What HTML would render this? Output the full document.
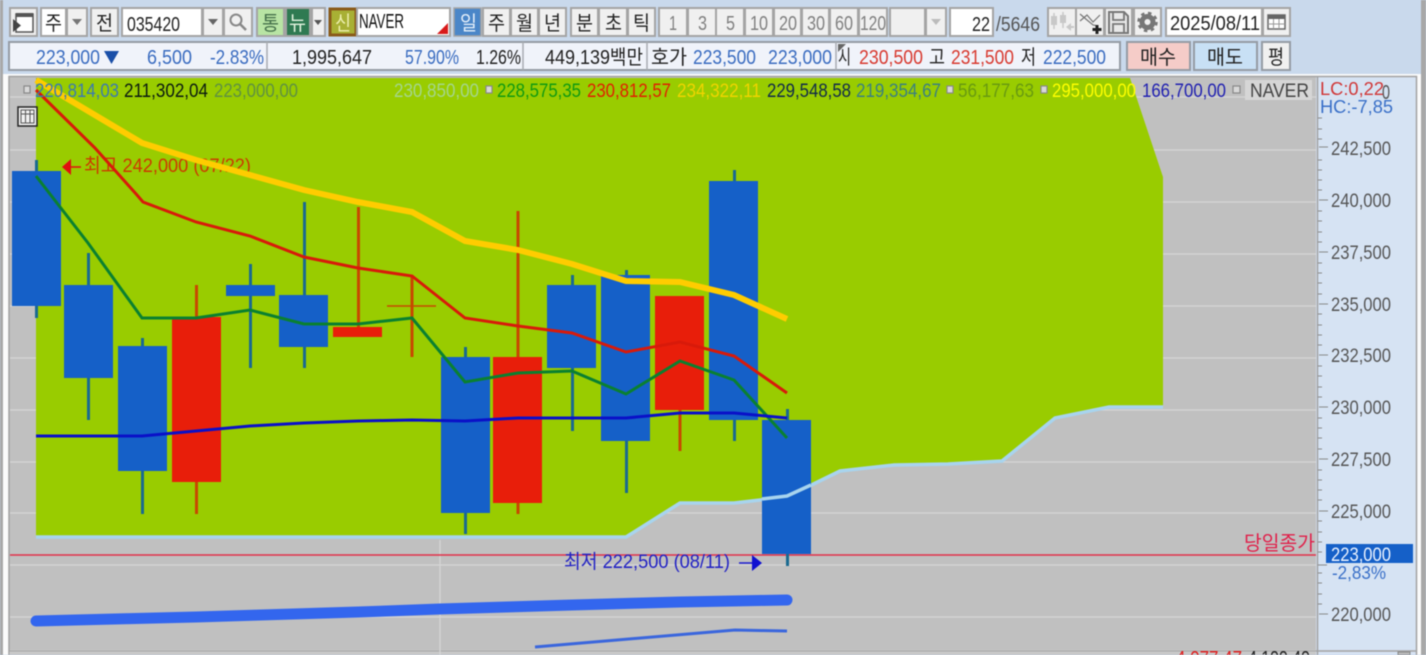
<!DOCTYPE html>
<html><head><meta charset="utf-8"><style>
html,body{margin:0;padding:0;width:1426px;height:655px;overflow:hidden;background:#c9d9ec}
svg{display:block;filter:blur(.5px)}
text{font-family:"Liberation Sans","Noto Sans CJK KR",sans-serif;font-size:20px}
.b{fill:#f0f0f0;stroke:#a4a4a4;stroke-width:2}
.w{fill:#fff;stroke:#a4a4a4;stroke-width:2}
.l{fill:#f0f3fa;stroke:#969ca4;stroke-width:2}
.k{fill:#222}.g{fill:#808080}.s{fill:#3a6cc0}.r{fill:#d83a30}
.ko{font-size:20px}
.lg{font-size:19.5px}
.ax{fill:#555;font-size:19.5px}
.gr{stroke:#d6d6d6;stroke-width:1.2}
.bl{fill:#1560c8}.rd{fill:#e81e0a}
.wb{stroke:#1a6a90;stroke-width:3}.wr{stroke:#c84800;stroke-width:3}
.sq{fill:#d8d8d8;stroke:#888;stroke-width:1.2}
</style></head><body>
<svg width="1426" height="655" viewBox="0 0 1426 655" xmlns="http://www.w3.org/2000/svg">
<rect width="1426" height="655" fill="#c9d9ec"/>
<rect x="0" y="0" width="3" height="655" fill="#a8a8a8"/>
<rect x="1421" y="0" width="5" height="655" fill="#a8a8a8"/>
<rect x="3" y="74" width="1418" height="581" fill="#fbfbfb"/>

<!-- ROW 1 -->
<rect class="b" x="10" y="8" width="27" height="28"/>
<path d="M16 14h17v18h-17z" fill="#fff" stroke="#555" stroke-width="1.500"/><path d="M16 13h17v4h-17z" fill="#555"/><path d="M13 19l8 6.500-8 6.500z" fill="#444"/>
<rect class="w" x="41" y="8" width="25" height="28"/><text class="k ko" x="45" y="30" textLength="17" lengthAdjust="spacingAndGlyphs">주</text>
<rect class="b" x="67" y="8" width="20" height="28"/><path d="M72 19h10l-5 6z" fill="#777"/>
<rect class="b" x="91" y="8" width="27" height="28"/><text class="k ko" x="96" y="30" textLength="17" lengthAdjust="spacingAndGlyphs">전</text>
<rect class="w" x="122" y="8" width="80" height="28"/><text class="k" x="127" y="31" textLength="53" lengthAdjust="spacingAndGlyphs">035420</text>
<rect class="b" x="203" y="8" width="20" height="28"/><path d="M208 19h10l-5 6z" fill="#666"/>
<rect class="b" x="224" y="8" width="28" height="28"/><circle cx="236" cy="20" r="5.500" fill="none" stroke="#888" stroke-width="2"/><path d="M240 24l6 6" stroke="#888" stroke-width="2.500"/>
<rect fill="#b8e4a4" stroke="#a4a4a4" stroke-width="2" x="257" y="8" width="27" height="28"/><text x="262" y="30" fill="#44704a" class="ko" textLength="17" lengthAdjust="spacingAndGlyphs">통</text>
<rect fill="#2f7a52" stroke="#a4a4a4" stroke-width="2" x="286" y="8" width="24" height="28"/><text x="289" y="30" fill="#e4f4e0" class="ko" textLength="17" lengthAdjust="spacingAndGlyphs">뉴</text>
<rect class="b" x="312" y="8" width="13" height="28"/><path d="M314 20h8l-4 5z" fill="#555"/>
<rect fill="#a8b034" stroke="#8a5a1a" stroke-width="3" x="330" y="9" width="26" height="26"/><text x="335" y="30" fill="#eef0b0" class="ko" textLength="16" lengthAdjust="spacingAndGlyphs">신</text>
<rect class="w" x="357" y="8" width="93" height="28"/><text fill="#111" x="359" y="28" textLength="45" lengthAdjust="spacingAndGlyphs">NAVER</text><path d="M448 23v11h-11z" fill="#d81a1a"/>
<rect fill="#4a86c8" stroke="#a4a4a4" stroke-width="1.500" x="454" y="8" width="27" height="28"/><text x="460" y="30" fill="#e6f0fa" class="ko" textLength="17" lengthAdjust="spacingAndGlyphs">일</text>
<rect class="b" x="483" y="8" width="27" height="28"/><text class="k ko" x="488" y="30" textLength="17" lengthAdjust="spacingAndGlyphs">주</text>
<rect class="b" x="511" y="8" width="27" height="28"/><text class="k ko" x="516" y="30" textLength="17" lengthAdjust="spacingAndGlyphs">월</text>
<rect class="b" x="539" y="8" width="27" height="28"/><text class="k ko" x="544" y="30" textLength="17" lengthAdjust="spacingAndGlyphs">년</text>
<rect class="b" x="571" y="8" width="27" height="28"/><text class="k ko" x="576" y="30" textLength="17" lengthAdjust="spacingAndGlyphs">분</text>
<rect class="b" x="599" y="8" width="28" height="28"/><text class="k ko" x="605" y="30" textLength="17" lengthAdjust="spacingAndGlyphs">초</text>
<rect class="b" x="628" y="8" width="27" height="28"/><text class="k ko" x="633" y="30" textLength="17" lengthAdjust="spacingAndGlyphs">틱</text>
<rect class="b" x="659" y="8" width="28" height="28"/><text class="g" x="669" y="30" textLength="8" lengthAdjust="spacingAndGlyphs">1</text>
<rect class="b" x="688" y="8" width="28" height="28"/><text class="g" x="698" y="30" textLength="9" lengthAdjust="spacingAndGlyphs">3</text>
<rect class="b" x="716" y="8" width="28" height="28"/><text class="g" x="726" y="30" textLength="9" lengthAdjust="spacingAndGlyphs">5</text>
<rect class="b" x="745" y="8" width="28" height="28"/><text class="g" x="750" y="30" textLength="18" lengthAdjust="spacingAndGlyphs">10</text>
<rect class="b" x="774" y="8" width="27" height="28"/><text class="g" x="779" y="30" textLength="18" lengthAdjust="spacingAndGlyphs">20</text>
<rect class="b" x="802" y="8" width="27" height="28"/><text class="g" x="807" y="30" textLength="18" lengthAdjust="spacingAndGlyphs">30</text>
<rect class="b" x="830" y="8" width="28" height="28"/><text class="g" x="835" y="30" textLength="18" lengthAdjust="spacingAndGlyphs">60</text>
<rect class="b" x="859" y="8" width="28" height="28"/><text class="g" x="860" y="30" textLength="26" lengthAdjust="spacingAndGlyphs">120</text>
<rect class="b" x="890" y="8" width="35" height="28"/>
<rect class="b" x="926" y="8" width="20" height="28"/><path d="M931 19h10l-5 6z" fill="#bbb"/>
<rect class="w" x="950" y="8" width="43" height="28"/><text class="k" x="972" y="31" textLength="18" lengthAdjust="spacingAndGlyphs">22</text>
<text fill="#555" x="996" y="31" textLength="44" lengthAdjust="spacingAndGlyphs">/5646</text>
<rect class="b" x="1048" y="8" width="28" height="28"/>
<path d="M1054 13v16M1063 12v16" stroke="#c8c8c8" stroke-width="1.500"/><path d="M1051 16h6v9h-6zM1060 15h6v8h-6z" fill="#c8c8c8"/><path d="M1066 27l5-4v8z" fill="#c8c8c8"/><path d="M1070 27h4" stroke="#c8c8c8" stroke-width="2"/>
<rect class="b" x="1076" y="8" width="28" height="28"/>
<path d="M1080 21l7-6 6 7 7-7M1080 14l7 6 6 5 5 1" fill="none" stroke="#777" stroke-width="1.200"/><path d="M1097 25v9M1092.500 29.500h9" stroke="#222" stroke-width="3"/>
<rect class="b" x="1105" y="8" width="27" height="28"/>
<path d="M1109 12h15l4 4v17h-19z" fill="#e8e8e8" stroke="#777" stroke-width="2"/><path d="M1113 12v8h11v-8M1113 33v-9h11v9" fill="none" stroke="#777" stroke-width="1.800"/>
<rect class="b" x="1134" y="8" width="27" height="28"/>
<circle cx="1147.500" cy="22" r="5.500" fill="none" stroke="#777" stroke-width="5"/><circle cx="1147.500" cy="22" r="9" fill="none" stroke="#777" stroke-width="2.500" stroke-dasharray="3.500 3.600"/>
<rect class="w" x="1166" y="8" width="96" height="28"/><text class="k" x="1170" y="30" textLength="90" lengthAdjust="spacingAndGlyphs">2025/08/11</text>
<rect class="b" x="1263" y="8" width="27" height="28"/>
<rect x="1268" y="15" width="17" height="14" fill="#fff" stroke="#666" stroke-width="1.500"/><path d="M1268 15h17v4h-17z" fill="#666"/><path d="M1273.500 19v10M1279 19v10M1268 24h17" stroke="#999" stroke-width="1"/>

<!-- ROW 2 -->
<rect class="l" x="9" y="42" width="1111" height="28"/>
<path d="M267 42v28M523 42v28M647 42v28M836 42v28" stroke="#a8acb2" stroke-width="1.500"/>
<text class="s" x="36" y="64" textLength="64" lengthAdjust="spacingAndGlyphs">223,000</text>
<path d="M104 51h15l-7.500 13z" fill="#1a4fa8"/>
<text class="s" x="147" y="64" textLength="45" lengthAdjust="spacingAndGlyphs">6,500</text>
<text class="s" x="210" y="64" textLength="54" lengthAdjust="spacingAndGlyphs">-2.83%</text>
<text class="k" x="292" y="64" textLength="80" lengthAdjust="spacingAndGlyphs">1,995,647</text>
<text class="s" x="405" y="64" textLength="54" lengthAdjust="spacingAndGlyphs">57.90%</text>
<text class="k" x="476" y="64" textLength="45" lengthAdjust="spacingAndGlyphs">1.26%</text>
<text class="k" x="545" y="64" textLength="98" lengthAdjust="spacingAndGlyphs">449,139백만</text>
<text class="k" x="651" y="64" textLength="36" lengthAdjust="spacingAndGlyphs">호가</text>
<text class="s" x="693" y="64" textLength="63" lengthAdjust="spacingAndGlyphs">223,500</text>
<text class="s" x="768" y="64" textLength="64" lengthAdjust="spacingAndGlyphs">223,000</text>
<text class="k" x="838" y="64" textLength="13" lengthAdjust="spacingAndGlyphs">시</text><path d="M838 44h8l-8 8z" fill="#666"/>
<text class="r" x="859" y="64" textLength="64" lengthAdjust="spacingAndGlyphs">230,500</text>
<text class="k" x="929" y="64" textLength="16" lengthAdjust="spacingAndGlyphs">고</text>
<text class="r" x="951" y="64" textLength="63" lengthAdjust="spacingAndGlyphs">231,500</text>
<text class="k" x="1021" y="64" textLength="15" lengthAdjust="spacingAndGlyphs">저</text>
<text class="s" x="1043" y="64" textLength="63" lengthAdjust="spacingAndGlyphs">222,500</text>
<rect fill="#f5ccc8" stroke="#969ca4" stroke-width="2" x="1127" y="42" width="63" height="28"/><text class="k" x="1140" y="64" textLength="36" lengthAdjust="spacingAndGlyphs">매수</text>
<rect fill="#c8e0f5" stroke="#969ca4" stroke-width="2" x="1194" y="42" width="63" height="28"/><text class="k" x="1207" y="64" textLength="36" lengthAdjust="spacingAndGlyphs">매도</text>
<rect fill="#f0f0f0" stroke="#969ca4" stroke-width="2" x="1262" y="42" width="28" height="28"/><text class="k" x="1268" y="64" textLength="16" lengthAdjust="spacingAndGlyphs">평</text>

<!-- CHART -->
<rect x="9" y="76" width="1307" height="574" fill="#c0c0c0"/>
<rect x="1316" y="76" width="100" height="579" fill="#d6e3f3"/>
<path d="M8.500 76.500h1408v579M1317.500 76v579M9 76v579" fill="none" stroke="#a2a2a2" stroke-width="1.500"/>
<path d="M9 651h1407" stroke="#a2a2a2" stroke-width="1.500"/>
<rect x="10" y="652" width="1306" height="3" fill="#c8c8c8"/>
<g class="gr">
<path d="M10 97h1306M10 150h1306M10 202h1306M10 254h1306M10 306h1306M10 358h1306M10 410h1306M10 462h1306M10 513h1306M10 565h1306M10 617h1306M440 540v115"/>
</g>
<path d="M36 78H1130L1163 177V407H1109L1055 418 1002 461 948 464 894 465 840 471 787 497 734 503 680 503 626 537H36z" fill="#99cc00"/>
<path d="M36 537H626L680 503H734L787 497 840 471 894 465 948 464 1002 461 1055 418 1109 407H1163" fill="none" stroke="#a8d4ee" stroke-width="3.500"/>

<!-- table icon -->
<rect x="18" y="107" width="19" height="19" fill="#f0f0f0" stroke="#222" stroke-width="1.500"/>
<path d="M21 110h13v13h-13zM21 114h13M25.500 110v13M30 110v13" fill="none" stroke="#555" stroke-width="1"/>

<!-- annotations (under lines) -->
<path d="M62 167l9-8v16z" fill="#e01010"/><path d="M70 167h11" stroke="#e01010" stroke-width="1.500"/>
<text fill="#cc3a00" x="84" y="172" style="font-size:19.500px" textLength="167" lengthAdjust="spacingAndGlyphs">최고 242,000 (07/22)</text>
<path d="M10 555h1306" stroke="#e2304a" stroke-width="1.500"/>
<text fill="#e0204a" x="1244" y="550" textLength="71" lengthAdjust="spacingAndGlyphs">당일종가</text>
<text fill="#2222c4" x="564" y="568" style="font-size:19.500px" textLength="166" lengthAdjust="spacingAndGlyphs">최저 222,500 (08/11)</text>
<path d="M739 563h14" stroke="#1a1ad0" stroke-width="1.500"/><path d="M752 555l10 8-10 8z" fill="#1010d0"/>

<!-- wicks -->
<path class="wb" d="M36.500 160V318M88.500 253V420M142.500 338V514M250.500 264V368M304.500 202V368M465.500 347V534M572.500 275V431M626.500 270V493M734.500 170V441M787.500 409V566"/>
<path class="wr" d="M196.500 285V514M358.500 207V327M412 275V357M518 211V514M680 296V451"/>
<path d="M387 306h49" stroke="#c84800" stroke-width="1.500"/>
<!-- bodies -->
<rect class="bl" x="12" y="171" width="49" height="135"/>
<rect class="bl" x="64" y="285" width="49" height="93"/>
<rect class="bl" x="118" y="346" width="49" height="125"/>
<rect class="rd" x="172" y="317" width="49" height="165"/>
<rect class="bl" x="226" y="285" width="49" height="11"/>
<rect class="bl" x="279" y="295" width="49" height="52"/>
<rect class="rd" x="333" y="327" width="49" height="10"/>
<rect class="bl" x="441" y="357" width="49" height="156"/>
<rect class="rd" x="493" y="357" width="49" height="146"/>
<rect class="bl" x="547" y="285" width="49" height="83"/>
<rect class="bl" x="601" y="275" width="49" height="166"/>
<rect class="rd" x="655" y="296" width="49" height="114"/>
<rect class="bl" x="709" y="181" width="49" height="239"/>
<rect class="bl" x="762" y="420" width="49" height="134"/>
<path d="M762 499L787 496 811 485" fill="none" stroke="#a8d4ee" stroke-width="3.500"/>

<!-- MAs -->
<path d="M36 80L142 143 196 160 250 175 304 190 358 202 412 212 465 241 518 250 572 264 626 281 680 282 734 295 787 319" fill="none" stroke="#ffcc00" stroke-width="6"/>
<path d="M36 90L95 148 137 195 143 202 196 222 250 236 304 257 358 268 412 276 465 318 518 326 572 333 626 352 680 342 734 356 787 393" fill="none" stroke="#d81a0a" stroke-width="3"/>
<path d="M36 176L88 243 142 318 196 318 250 310 304 324 358 324 412 318 465 382 518 373 572 371 626 394 680 361 734 380 787 438" fill="none" stroke="#0a8030" stroke-width="3"/>
<path d="M36 436L142 436 196 431 250 426 304 423 358 421 412 420 465 421 518 418 572 418 626 418 680 413 734 413 787 418" fill="none" stroke="#0a10c8" stroke-width="3"/>
<path d="M36 621L196 617 358 612 440 609 572 605 680 602 787 600" fill="none" stroke="#3366ee" stroke-width="11" stroke-linecap="round"/>
<path d="M535 647L735 630 787 631" fill="none" stroke="#3a66dd" stroke-width="3"/>

<!-- legend (over lines) -->
<rect x="24" y="86" width="6" height="7" class="sq"/>
<text class="lg" fill="#3a7ab0" x="35" y="97" textLength="84" lengthAdjust="spacingAndGlyphs">220,814,03</text>
<text class="lg" fill="#0a1a10" x="124" y="97" textLength="84" lengthAdjust="spacingAndGlyphs">211,302,04</text>
<text class="lg" fill="#5f9140" x="214" y="97" textLength="84" lengthAdjust="spacingAndGlyphs">223,000,00</text>
<text class="lg" fill="#a4d68c" x="394" y="97" textLength="85" lengthAdjust="spacingAndGlyphs">230,850,00</text>
<rect x="486" y="86" width="6" height="7" class="sq"/>
<text class="lg" fill="#109a10" x="497" y="97" textLength="84" lengthAdjust="spacingAndGlyphs">228,575,35</text>
<text class="lg" fill="#e02000" x="587" y="97" textLength="84" lengthAdjust="spacingAndGlyphs">230,812,57</text>
<text class="lg" fill="#f0d400" x="677" y="97" textLength="84" lengthAdjust="spacingAndGlyphs">234,322,11</text>
<text class="lg" fill="#102a4a" x="767" y="97" textLength="84" lengthAdjust="spacingAndGlyphs">229,548,58</text>
<text class="lg" fill="#3a8080" x="856" y="97" textLength="85" lengthAdjust="spacingAndGlyphs">219,354,67</text>
<rect x="947" y="86" width="6" height="7" class="sq"/>
<text class="lg" fill="#689a10" x="958" y="97" textLength="76" lengthAdjust="spacingAndGlyphs">56,177,63</text>
<rect x="1041" y="86" width="6" height="7" class="sq"/>
<text class="lg" fill="#ffff00" x="1052" y="97" textLength="84" lengthAdjust="spacingAndGlyphs">295,000,00</text>
<text class="lg" fill="#2020b0" x="1142" y="97" textLength="84" lengthAdjust="spacingAndGlyphs">166,700,00</text>
<rect x="1233" y="86" width="7" height="7" class="sq"/>
<rect x="1245" y="80" width="67" height="20" fill="#d6d6d6"/>
<text class="lg" fill="#444" x="1250" y="97" textLength="59" lengthAdjust="spacingAndGlyphs">NAVER</text>

<!-- axis -->
<path d="M1319 147h9M1319 200h9M1319 252h9M1319 304h9M1319 355h9M1319 407h9M1319 459h9M1319 511h9M1319 614h9" stroke="#888" stroke-width="1"/>
<path d="M1318 118h4M1318 129h4M1318 139h4M1318 160h4M1318 170h4M1318 180h4M1318 190h4M1318 211h4M1318 221h4M1318 232h4M1318 242h4M1318 263h4M1318 273h4M1318 283h4M1318 294h4M1318 314h4M1318 325h4M1318 335h4M1318 345h4M1318 366h4M1318 376h4M1318 387h4M1318 397h4M1318 418h4M1318 428h4M1318 438h4M1318 449h4M1318 470h4M1318 480h4M1318 490h4M1318 500h4M1318 521h4M1318 532h4M1318 542h4M1318 552h4M1318 565h9M1318 573h4M1318 583h4M1318 594h4M1318 604h4" stroke="#888" stroke-width="1"/>
<text fill="#d03838" x="1320" y="95" style="font-size:18px" textLength="64" lengthAdjust="spacingAndGlyphs">LC:0,22</text>
<text fill="#555" x="1382" y="99" textLength="8" lengthAdjust="spacingAndGlyphs">0</text>
<text fill="#3a70c8" x="1320" y="113" style="font-size:18px" textLength="73" lengthAdjust="spacingAndGlyphs">HC:-7,85</text>
<text class="ax" x="1331" y="155" textLength="60" lengthAdjust="spacingAndGlyphs">242,500</text>
<text class="ax" x="1331" y="207" textLength="60" lengthAdjust="spacingAndGlyphs">240,000</text>
<text class="ax" x="1331" y="259" textLength="60" lengthAdjust="spacingAndGlyphs">237,500</text>
<text class="ax" x="1331" y="311" textLength="60" lengthAdjust="spacingAndGlyphs">235,000</text>
<text class="ax" x="1331" y="362" textLength="60" lengthAdjust="spacingAndGlyphs">232,500</text>
<text class="ax" x="1331" y="414" textLength="60" lengthAdjust="spacingAndGlyphs">230,000</text>
<text class="ax" x="1331" y="466" textLength="60" lengthAdjust="spacingAndGlyphs">227,500</text>
<text class="ax" x="1331" y="518" textLength="60" lengthAdjust="spacingAndGlyphs">225,000</text>
<rect x="1326" y="544" width="87" height="19" fill="#1560c8"/>
<text fill="#eaf2ff" x="1331" y="561" style="font-size:19.500px" textLength="60" lengthAdjust="spacingAndGlyphs">223,000</text>
<text fill="#3a70c8" x="1332" y="579" style="font-size:18.500px" textLength="54" lengthAdjust="spacingAndGlyphs">-2,83%</text>
<text class="ax" x="1331" y="621" textLength="60" lengthAdjust="spacingAndGlyphs">220,000</text>

<!-- clipped bottom row -->
<text fill="#e02020" x="1176" y="665" textLength="66" lengthAdjust="spacingAndGlyphs">4,077.47</text>
<text fill="#222" x="1248" y="665" textLength="62" lengthAdjust="spacingAndGlyphs">4,199.49</text>
<rect x="1398" y="652" width="12" height="3" fill="#bbb" stroke="#888" stroke-width="1"/>
</svg>
</body></html>
